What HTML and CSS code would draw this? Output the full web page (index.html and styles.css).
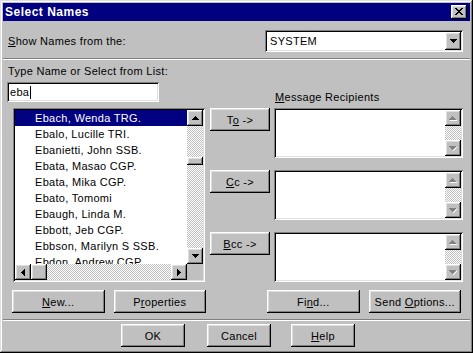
FILE: index.html
```html
<!DOCTYPE html>
<html>
<head>
<meta charset="utf-8">
<link rel="stylesheet" href="styles.css">
</head>
<body>
<div class="win">
  <div class="titlebar">
    <span class="title-text">Select Names</span>
    <span class="close btn3d"><svg width="8" height="7" viewBox="0 0 8 7"><path d="M0 0h2v1h1v1h2V1h1V0h2v1H7v1H6v1H5v1h1v1h1v1h1v1H6V6H5V5H3v1H2v1H0V6h1V5h1V4h1V3H2V2H1V1H0z"/></svg></span>
  </div>

  <div class="row-top">
    <span class="lbl"><u>S</u>how Names from the:</span>
    <div class="combo sunken">
      <span class="combo-text">SYSTEM</span>
      <span class="sbtn btn3d"><svg width="7" height="4" viewBox="0 0 7 4"><path d="M0 0h7v1H6v1H5v1H4v1H3V3H2V2H1V1H0z"/></svg></span>
    </div>
  </div>

  <div class="sep"></div>

  <div class="main">
    <div class="col-left">
      <div class="lbl lbl-type">Type Name or Select from List:</div>
      <div class="input sunken"><span>eba</span><span class="caret"></span></div>
      <div class="listbox sunken">
        <ul class="items">
          <li class="sel">Ebach, Wenda TRG.</li>
          <li>Ebalo, Lucille TRI.</li>
          <li>Ebanietti, John SSB.</li>
          <li>Ebata, Masao CGP.</li>
          <li>Ebata, Mika CGP.</li>
          <li>Ebato, Tomomi</li>
          <li>Ebaugh, Linda M.</li>
          <li>Ebbott, Jeb CGP.</li>
          <li>Ebbson, Marilyn S SSB.</li>
          <li>Ebdon, Andrew CGP.</li>
        </ul>
        <div class="vscroll">
          <span class="sbtn btn3d"><svg width="7" height="4" viewBox="0 0 7 4"><path d="M3 0h1v1h1v1h1v1h1v1H0V3h1V2h1V1h1z"/></svg></span>
          <span class="track vt-a"></span>
          <span class="thumb-v btn3d"></span>
          <span class="track vt-b"></span>
          <span class="sbtn btn3d"><svg width="7" height="4" viewBox="0 0 7 4"><path d="M0 0h7v1H6v1H5v1H4v1H3V3H2V2H1V1H0z"/></svg></span>
        </div>
        <div class="hscroll">
          <span class="sbtn btn3d"><svg width="4" height="7" viewBox="0 0 4 7"><path d="M3 0h1v7H3V6H2V5H1V4H0V3h1V2h1V1h1z"/></svg></span>
          <span class="thumb-h btn3d"></span>
          <span class="track ht"></span>
          <span class="sbtn btn3d"><svg width="4" height="7" viewBox="0 0 4 7"><path d="M0 0h1v1h1v1h1v1h1v1H3v1H2v1H1v1H0z"/></svg></span>
        </div>
        <div class="corner"></div>
      </div>
    </div>

    <div class="col-btns">
      <button class="btn btn3d"><span>T<u>o</u> -&gt;</span></button>
      <button class="btn btn3d gap"><span><u>C</u>c -&gt;</span></button>
      <button class="btn btn3d gap"><span><u>B</u>cc -&gt;</span></button>
    </div>

    <div class="col-right">
      <div class="lbl lbl-msg"><u>M</u>essage Recipients</div>
      <div class="rbox sunken">
        <div class="rbox-body"></div>
        <div class="rscroll">
          <span class="sbtn btn3d dis"><svg width="8" height="5" viewBox="0 0 8 5"><path class="hi" d="M4 1h1v1h1v1h1v1h1v1H1V4h6V3H6V2H5V1H4z"/><path d="M3 0h1v1h1v1h1v1h1v1H0V3h1V2h1V1h1z"/></svg></span>
          <span class="track"></span>
          <span class="sbtn btn3d dis"><svg width="8" height="5" viewBox="0 0 8 5"><path class="hi" d="M7 1h1v1H7v1H6v1H5v1H4V4h1V3h1V2h1z"/><path d="M0 0h7v1H6v1H5v1H4v1H3V3H2V2H1V1H0z"/></svg></span>
        </div>
      </div>
      <div class="rbox sunken gap">
        <div class="rbox-body"></div>
        <div class="rscroll">
          <span class="sbtn btn3d dis"><svg width="8" height="5" viewBox="0 0 8 5"><path class="hi" d="M4 1h1v1h1v1h1v1h1v1H1V4h6V3H6V2H5V1H4z"/><path d="M3 0h1v1h1v1h1v1h1v1H0V3h1V2h1V1h1z"/></svg></span>
          <span class="track"></span>
          <span class="sbtn btn3d dis"><svg width="8" height="5" viewBox="0 0 8 5"><path class="hi" d="M7 1h1v1H7v1H6v1H5v1H4V4h1V3h1V2h1z"/><path d="M0 0h7v1H6v1H5v1H4v1H3V3H2V2H1V1H0z"/></svg></span>
        </div>
      </div>
      <div class="rbox sunken gap">
        <div class="rbox-body"></div>
        <div class="rscroll">
          <span class="sbtn btn3d dis"><svg width="8" height="5" viewBox="0 0 8 5"><path class="hi" d="M4 1h1v1h1v1h1v1h1v1H1V4h6V3H6V2H5V1H4z"/><path d="M3 0h1v1h1v1h1v1h1v1H0V3h1V2h1V1h1z"/></svg></span>
          <span class="track"></span>
          <span class="sbtn btn3d dis"><svg width="8" height="5" viewBox="0 0 8 5"><path class="hi" d="M7 1h1v1H7v1H6v1H5v1H4V4h1V3h1V2h1z"/><path d="M0 0h7v1H6v1H5v1H4v1H3V3H2V2H1V1H0z"/></svg></span>
        </div>
      </div>
    </div>
  </div>

  <div class="row-actions">
    <button class="btn btn3d wide"><span><u>N</u>ew...</span></button>
    <button class="btn btn3d wide"><span>P<u>r</u>operties</span></button>
    <button class="btn btn3d wide find"><span>Fi<u>n</u>d...</span></button>
    <button class="btn btn3d wide"><span>Send <u>O</u>ptions...</span></button>
  </div>

  <div class="sep sep2"></div>

  <div class="row-ok">
    <button class="btn btn3d ok"><span>OK</span></button>
    <button class="btn btn3d ok cancel"><span>Cancel</span></button>
    <button class="btn btn3d ok help"><span><u>H</u>elp</span></button>
  </div>
</div>
</body>
</html>
```

FILE: styles.css
```css
* { box-sizing: border-box; }
html, body { margin: 0; padding: 0; background: #c0c0c0; }
body {
  font-family: "Liberation Sans", Arial, sans-serif;
  font-size: 11px;
  letter-spacing: 0.3px;
  color: #000;
}
.win {
  width: 473px;
  height: 353px;
  padding: 3px;
  background: #c0c0c0;
  box-shadow: inset -1px -1px #000, inset 1px 1px #dfdfdf, inset -2px -2px #808080, inset 2px 2px #fff;
  display: flex;
  flex-direction: column;
}
.btn3d {
  background: #c0c0c0;
  box-shadow: inset -1px -1px #000, inset 1px 1px #fff, inset -2px -2px #808080, inset 2px 2px #dfdfdf;
}
.sunken {
  background: #fff;
  box-shadow: inset 1px 1px #808080, inset -1px -1px #fff, inset 2px 2px #000, inset -2px -2px #dfdfdf;
  padding: 2px;
}
.titlebar {
  height: 18px;
  background: #000080;
  display: flex;
  align-items: center;
  justify-content: space-between;
  padding: 0 3px 0 2px;
}
.title-text {
  color: #fff;
  font-weight: bold;
  font-size: 12px;
  letter-spacing: 0.5px;
}
.close {
  width: 16px;
  height: 14px;
  display: flex;
  align-items: center;
  justify-content: center;
  padding: 0 1px 1px 0;
}
.row-top {
  margin-top: 9px;
  height: 22px;
  display: flex;
  align-items: center;
  padding-left: 5px;
}
.lbl { line-height: 13px; white-space: nowrap; }
.combo {
  margin-left: auto;
  margin-right: 7px;
  width: 198px;
  height: 22px;
  display: flex;
  align-items: stretch;
}
.combo-text { flex: 1; padding-left: 3px; line-height: 18px; }
.sbtn {
  width: 16px;
  height: 16px;
  flex: none;
  display: flex;
  align-items: center;
  justify-content: center;
}
.combo .sbtn { height: 18px; }
.sbtn svg { display: block; }
.sep {
  margin-top: 6px;
  height: 2px;
  border-top: 1px solid #808080;
  border-bottom: 1px solid #fff;
}
.main {
  display: flex;
  padding-left: 4px;
  height: 222px;
}
.col-left { width: 198px; display: flex; flex-direction: column; }
.lbl-type { margin-top: 5px; margin-left: 1px; }
.input {
  margin-top: 4px;
  width: 152px;
  height: 20px;
  padding-left: 3px;
  line-height: 16px;
  display: flex;
  align-items: center;
}
.caret { display: inline-block; width: 1px; height: 13px; background: #000; margin-left: 1px; }
.listbox {
  margin-top: 6px;
  margin-left: 6px;
  width: 192px;
  height: 174px;
  display: grid;
  grid-template-columns: 1fr 16px;
  grid-template-rows: 1fr 16px;
}
.items {
  list-style: none;
  margin: 0;
  padding: 0;
  overflow: hidden;
}
.items li {
  line-height: 16px;
  height: 16px;
  padding-left: 20px;
  white-space: nowrap;
}
.items li.sel { background: #000080; color: #fff; }
.vscroll { display: flex; flex-direction: column; }
.track {
  background-color: #fff;
  background-image: conic-gradient(#c0c0c0 0 25%, #fff 0 50%, #c0c0c0 0 75%, #fff 0);
  background-size: 2px 2px;
}
.vt-a { height: 31px; flex: none; }
.thumb-v { height: 8px; flex: none; }
.vt-b { flex: 1; }
.hscroll { display: flex; }
.thumb-h { width: 16px; flex: none; }
.ht { flex: 1; }
.corner { background: #c0c0c0; }

.col-btns { width: 60px; margin-left: 5px; padding-top: 48px; display: flex; flex-direction: column; }
.btn {
  border: 0;
  margin: 0;
  padding: 0;
  font-family: inherit;
  font-size: 11px;
  letter-spacing: 0.3px;
  color: #000;
  height: 23px;
  display: flex;
  align-items: center;
  justify-content: center;
  white-space: pre;
}
.col-btns .btn { width: 60px; }
.col-btns .gap { margin-top: 39px; }

.col-right { width: 189px; margin-left: 4px; padding-top: 31px; display: flex; flex-direction: column; }
.lbl-msg { margin-left: 1px; margin-bottom: 4px; }
.rbox { height: 50px; display: flex; }
.rbox.gap { margin-top: 12px; }
.rbox-body { flex: 1; }
.rscroll { width: 16px; display: flex; flex-direction: column; }
.rscroll .track { flex: 1; }
.dis svg path { fill: #808080; }
.dis svg path.hi { fill: #fff; }

.row-actions { margin-top: 8px; display: flex; padding-left: 9px; }
.wide { width: 93px; margin-right: 9px; }
.find { margin-left: 52px; }
.sep2 { margin-top: 6px; }
.row-ok { margin-top: 3px; display: flex; padding-left: 118px; }
.ok { width: 64px; }
.cancel { margin-left: 22px; }
.help { margin-left: 20px; }
```
